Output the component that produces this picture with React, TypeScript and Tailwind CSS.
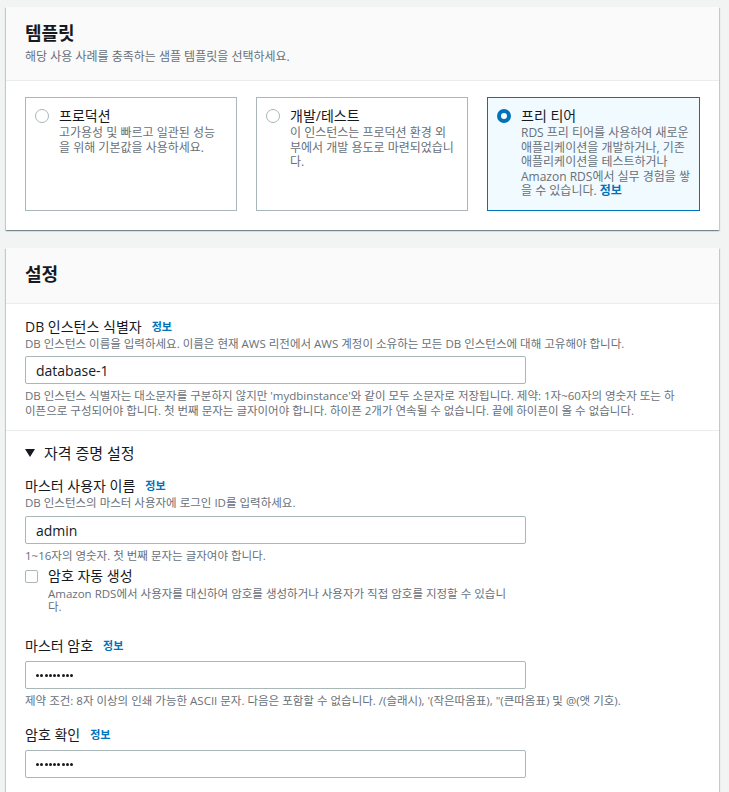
import React from "react";

const FONT = { fontFamily: '"Open Sans", "Noto Sans CJK KR", sans-serif' };

function Info() {
  return <span className="ml-[10px] text-[11px] font-bold text-[#0073bb]">정보</span>;
}

function Radio({ checked }: { checked?: boolean }) {
  return checked ? (
    <div className="w-[14px] h-[14px] rounded-full border-[4px] border-[#0073bb] bg-white shrink-0" />
  ) : (
    <div className="w-[14px] h-[14px] rounded-full border border-[#aab7b8] bg-white shrink-0" />
  );
}

function Tile({ title, children, checked }: { title: string; children: React.ReactNode; checked?: boolean }) {
  return (
    <div
      className={
        "h-[114px] border pl-[9px] pr-[10px] pt-[8px] flex " +
        (checked ? "border-[#0073bb] bg-[#f1faff]" : "border-[#aab7b8] bg-white")
      }
    >
      <div className="mt-[3px]">
        <Radio checked={checked} />
      </div>
      <div className="ml-[10px]">
        <div className="text-[14px] leading-[20px] text-[#16191f]">{title}</div>
        <div className="text-[12px] leading-[14.5px] text-[#687078] whitespace-nowrap">{children}</div>
      </div>
    </div>
  );
}

function Input({ value }: { value: string }) {
  return (
    <div className="w-[501px] h-[28px] border border-[#aab7b8] rounded-[2px] bg-white flex items-center pl-[10px] text-[14px] text-[#16191f]">
      {value}
    </div>
  );
}

function PasswordInput() {
  return (
    <div className="w-[501px] h-[28px] border border-[#aab7b8] rounded-[2px] bg-white flex items-center pl-[10px] gap-[1.3px]">
      {[0, 1, 2, 3, 4, 5, 6, 7, 8].map((i) => (
        <span key={i} className="w-[3px] h-[3px] rounded-full bg-[#16191f]" />
      ))}
    </div>
  );
}

export default function App() {
  return (
    <div className="min-h-[792px] bg-[#f2f3f3] pt-[7px] pl-[6px] pr-[10px]" style={FONT}>
      {/* Template card */}
      <div className="bg-white shadow-[0_1px_1px_0_rgba(0,28,36,0.3),1px_1px_1px_0_rgba(0,28,36,0.15),-1px_1px_1px_0_rgba(0,28,36,0.15)]">
        <div className="bg-[#fafafa] border-b border-[#eaeded] h-[74px] px-[19px] pt-[15px]">
          <div className="text-[18px] leading-[22px] font-bold text-[#16191f]">템플릿</div>
          <div className="mt-[5px] text-[12px] leading-[16px] text-[#687078]">해당 사용 사례를 충족하는 샘플 템플릿을 선택하세요.</div>
        </div>
        <div className="px-[19px] pt-[16px] pb-[19px] grid grid-cols-[212px_212px_213px] gap-[19px]">
          <Tile title="프로덕션">
            고가용성 및 빠르고 일관된 성능
            <br />을 위해 기본값을 사용하세요.
          </Tile>
          <Tile title="개발/테스트">
            이 인스턴스는 프로덕션 환경 외
            <br />
            부에서 개발 용도로 마련되었습니
            <br />
            다.
          </Tile>
          <Tile title="프리 티어" checked>
            RDS 프리 티어를 사용하여 새로운
            <br />
            애플리케이션을 개발하거나, 기존
            <br />
            애플리케이션을 테스트하거나
            <br />
            Amazon RDS에서 실무 경험을 쌓
            <br />을 수 있습니다. <span className="font-bold text-[#0073bb]">정보</span>
          </Tile>
        </div>
      </div>

      {/* Settings card */}
      <div className="mt-[18px] bg-white shadow-[0_1px_1px_0_rgba(0,28,36,0.3),1px_1px_1px_0_rgba(0,28,36,0.15),-1px_1px_1px_0_rgba(0,28,36,0.15)]">
        <div className="bg-[#fafafa] border-b border-[#eaeded] h-[56px] px-[19px] pt-[15px]">
          <div className="text-[18px] leading-[22px] font-bold text-[#16191f]">설정</div>
        </div>

        <div className="px-[19px] pt-[14px] pb-[12px] border-b border-[#eaeded]">
          <div className="text-[14px] leading-[18px] text-[#16191f] flex items-center">
            DB 인스턴스 식별자<Info />
          </div>
          <div className="text-[11.5px] leading-[16px] text-[#687078]">
            DB 인스턴스 이름을 입력하세요. 이름은 현재 AWS 리전에서 AWS 계정이 소유하는 모든 DB 인스턴스에 대해 고유해야 합니다.
          </div>
          <div className="mt-[4px]">
            <Input value="database-1" />
          </div>
          <div className="mt-[4px] text-[11.5px] leading-[15px] text-[#687078]">
            DB 인스턴스 식별자는 대소문자를 구분하지 않지만 'mydbinstance'와 같이 모두 소문자로 저장됩니다. 제약: 1자~60자의 영숫자 또는 하
            <br />
            이픈으로 구성되어야 합니다. 첫 번째 문자는 글자이어야 합니다. 하이픈 2개가 연속될 수 없습니다. 끝에 하이픈이 올 수 없습니다.
          </div>
        </div>

        <div className="px-[19px] pt-[12px] pb-[16px]">
          <div className="flex items-center text-[15px] leading-[20px] text-[#16191f]">
            <svg width="10" height="8" viewBox="0 0 10 8" className="mr-[9px]">
              <path d="M0 0 L10 0 L5 8 Z" fill="#16191f" />
            </svg>
            자격 증명 설정
          </div>

          <div className="mt-[14px] text-[14px] leading-[18px] text-[#16191f] flex items-center">
            마스터 사용자 이름<Info />
          </div>
          <div className="text-[11.5px] leading-[16px] text-[#687078]">DB 인스턴스의 마스터 사용자에 로그인 ID를 입력하세요.</div>
          <div className="mt-[5px]">
            <Input value="admin" />
          </div>
          <div className="mt-[4px] text-[11.5px] leading-[15px] text-[#687078]">1~16자의 영숫자. 첫 번째 문자는 글자여야 합니다.</div>

          <div className="mt-[4px] flex">
            <div className="mt-[3px] w-[13px] h-[13px] border border-[#aab7b8] rounded-[2px] bg-white shrink-0" />
            <div className="ml-[10px]">
              <div className="text-[14px] leading-[18px] text-[#16191f]">암호 자동 생성</div>
              <div className="text-[11.5px] leading-[13px] text-[#687078] mt-[2px]">
                Amazon RDS에서 사용자를 대신하여 암호를 생성하거나 사용자가 직접 암호를 지정할 수 있습니
                <br />
                다.
              </div>
            </div>
          </div>

          <div className="mt-[24px] text-[14px] leading-[18px] text-[#16191f] flex items-center">
            마스터 암호<Info />
          </div>
          <div className="mt-[6px]">
            <PasswordInput />
          </div>
          <div className="mt-[4px] text-[11.5px] leading-[15px] text-[#687078]">
            제약 조건: 8자 이상의 인쇄 가능한 ASCII 문자. 다음은 포함할 수 없습니다. /(슬래시), '(작은따옴표), "(큰따옴표) 및 @(앳 기호).
          </div>

          <div className="mt-[18px] text-[14px] leading-[18px] text-[#16191f] flex items-center">
            암호 확인<Info />
          </div>
          <div className="mt-[6px]">
            <PasswordInput />
          </div>
        </div>
      </div>
    </div>
  );
}
